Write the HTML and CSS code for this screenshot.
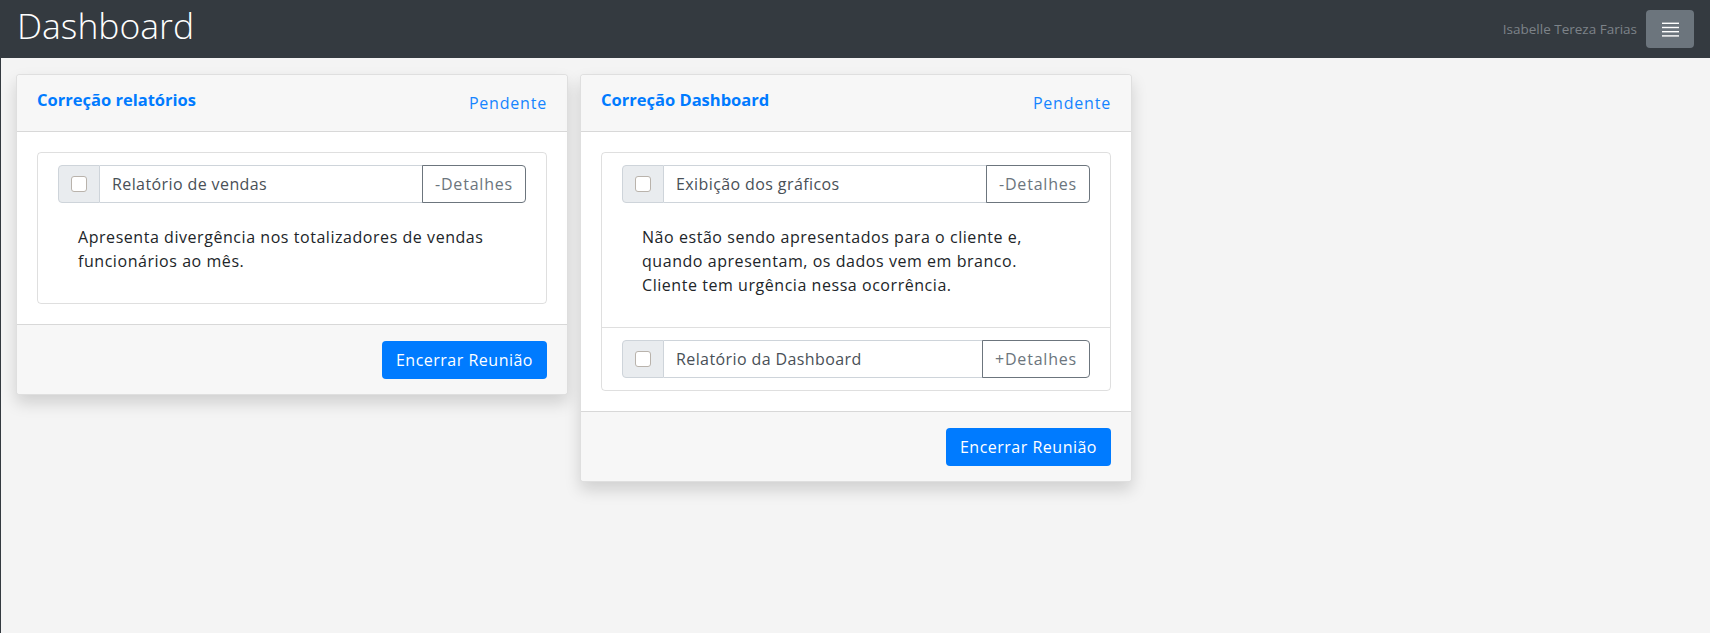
FILE: index.html
```html
<!DOCTYPE html>
<html lang="pt-BR">
<head>
<meta charset="utf-8">
<title>Dashboard</title>
<link rel="stylesheet" href="styles.css">
</head>
<body>
<header class="navbar">
  <h1 class="brand">Dashboard</h1>
  <div class="nav-right">
    <span class="user">Isabelle Tereza Farias</span>
    <button class="menu-btn" type="button" aria-label="Menu">
      <svg width="17" height="16" viewBox="0 0 17 16" aria-hidden="true">
        <g fill="#ffffff">
          <rect x="0" y="1.6" width="17" height="1.4"/>
          <rect x="0" y="5.8" width="17" height="1.4"/>
          <rect x="0" y="10" width="17" height="1.4"/>
          <rect x="0" y="14.2" width="17" height="1.4"/>
        </g>
      </svg>
    </button>
  </div>
</header>
<main class="content">
  <section class="card">
    <div class="card-header">
      <h5 class="card-title">Correção relatórios</h5>
      <span class="status">Pendente</span>
    </div>
    <div class="card-body">
      <ul class="list-group">
        <li class="list-item">
          <div class="input-group">
            <span class="addon"><input type="checkbox" class="chk"></span>
            <span class="field">Relatório de vendas</span>
            <button class="btn-details" type="button">-Detalhes</button>
          </div>
          <p class="desc">Apresenta divergência nos totalizadores de vendas<br>funcionários ao mês.</p>
        </li>
      </ul>
    </div>
    <div class="card-footer">
      <button class="btn-primary" type="button">Encerrar Reunião</button>
    </div>
  </section>
  <section class="card">
    <div class="card-header">
      <h5 class="card-title">Correção Dashboard</h5>
      <span class="status">Pendente</span>
    </div>
    <div class="card-body">
      <ul class="list-group">
        <li class="list-item">
          <div class="input-group">
            <span class="addon"><input type="checkbox" class="chk"></span>
            <span class="field">Exibição dos gráficos</span>
            <button class="btn-details" type="button">-Detalhes</button>
          </div>
          <p class="desc">Não estão sendo apresentados para o cliente e,<br>quando apresentam, os dados vem em branco.<br>Cliente tem urgência nessa ocorrência.</p>
        </li>
        <li class="list-item">
          <div class="input-group">
            <span class="addon"><input type="checkbox" class="chk"></span>
            <span class="field">Relatório da Dashboard</span>
            <button class="btn-details" type="button">+Detalhes</button>
          </div>
        </li>
      </ul>
    </div>
    <div class="card-footer">
      <button class="btn-primary" type="button">Encerrar Reunião</button>
    </div>
  </section>
</main>
</body>
</html>
```
FILE: styles.css
```css
* { box-sizing: border-box; }
html, body { margin: 0; padding: 0; }
body {
  font-family: "Open Sans", "Liberation Sans", sans-serif;
  font-size: 16px;
  color: #212529;
  background: #f4f4f4;
  letter-spacing: 0.4px;
}
.navbar {
  height: 58px;
  background: #343a40;
  display: flex;
  justify-content: space-between;
  align-items: flex-start;
  padding: 0 16px;
}
.brand {
  margin: 1px 0 0 1px;
  font-size: 35.5px;
  font-weight: 300;
  line-height: normal;
  color: #ffffff;
  letter-spacing: 0;
}
.nav-right {
  height: 58px;
  display: flex;
  align-items: center;
}
.user {
  font-size: 13.5px;
  color: #7d8389;
  margin-right: 9px;
  letter-spacing: 0;
}
.menu-btn {
  width: 48px;
  height: 38px;
  background: #6c757d;
  border: 0;
  border-radius: 4px;
  display: flex;
  align-items: center;
  justify-content: center;
  padding: 0;
}
.content {
  border-left: 1px solid #343a40;
  min-height: calc(100vh - 58px);
  padding: 16px 15px;
  display: flex;
  align-items: flex-start;
  gap: 12px;
}
.card {
  width: 552px;
  background: #ffffff;
  border: 1px solid rgba(0,0,0,.125);
  border-radius: 4px;
  box-shadow: 0 .5rem 1rem rgba(0,0,0,.15);
}
.card-header {
  display: flex;
  justify-content: space-between;
  align-items: flex-start;
  padding: 12px 20px 11px;
  background: #f7f7f7;
  border-bottom: 1px solid rgba(0,0,0,.125);
  border-radius: 3px 3px 0 0;
}
.card-title {
  margin: 0;
  font-size: 16.5px;
  line-height: 25px;
  font-weight: 700;
  color: #007bff;
  letter-spacing: 0;
}
.status {
  font-size: 16px;
  line-height: 33px;
  color: #1584ff;
  letter-spacing: 0.8px;
}
.card-body {
  padding: 20px;
}
.list-group {
  list-style: none;
  margin: 0;
  padding: 0;
  border: 1px solid rgba(0,0,0,.125);
  border-radius: 4px;
}
.list-item {
  padding: 12px 20px;
}
.list-item + .list-item {
  border-top: 1px solid rgba(0,0,0,.125);
}
.input-group {
  display: flex;
  height: 38px;
}
.addon {
  width: 42px;
  display: flex;
  align-items: center;
  justify-content: center;
  background: #e9ecef;
  border: 1px solid #ced4da;
  border-radius: 4px 0 0 4px;
}
.chk {
  appearance: none;
  -webkit-appearance: none;
  width: 16px;
  height: 16px;
  margin: 0;
  background: #ffffff;
  border: 1px solid #b9b3ac;
  border-radius: 3px;
}
.field {
  flex: 1;
  border: 1px solid #ced4da;
  border-left: 0;
  padding: 0 12px;
  line-height: 36px;
  color: #495057;
  background: #ffffff;
}
.btn-details {
  font-family: inherit;
  font-size: 16px;
  letter-spacing: 0.8px;
  color: #6c757d;
  background: transparent;
  border: 1px solid #6c757d;
  border-radius: 0 4px 4px 0;
  padding: 0 12px;
  height: 38px;
  margin-left: -1px;
}
.desc {
  margin: 22px 20px 18px;
  line-height: 24px;
  letter-spacing: 0.55px;
}
.card-footer {
  display: flex;
  justify-content: flex-end;
  padding: 16px 20px 15px;
  background: #f7f7f7;
  border-top: 1px solid rgba(0,0,0,.125);
  border-radius: 0 0 3px 3px;
}
.btn-primary {
  font-family: inherit;
  font-size: 16px;
  letter-spacing: 0.5px;
  color: #ffffff;
  background: #007bff;
  border: 0;
  border-radius: 4px;
  height: 38px;
  padding: 0 14px;
}
```
